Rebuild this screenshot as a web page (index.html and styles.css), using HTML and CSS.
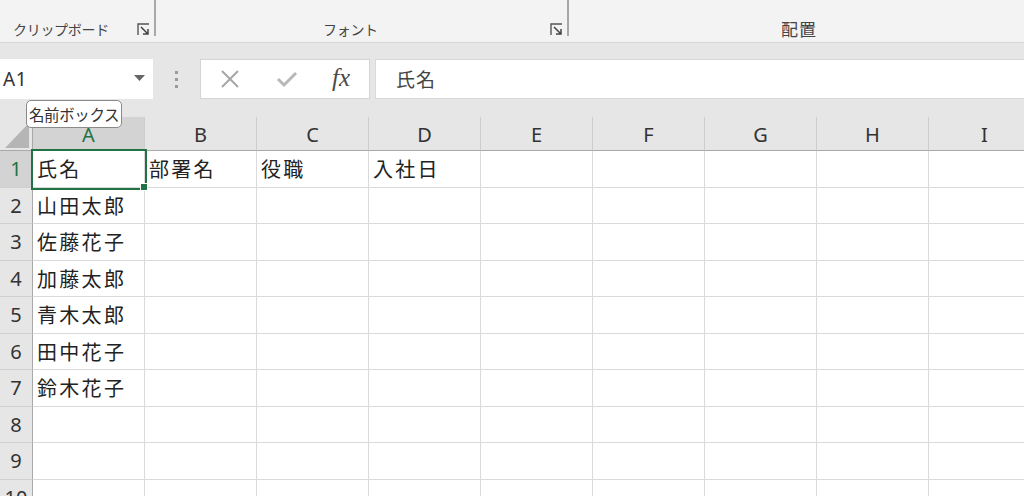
FILE: index.html
```html
<!DOCTYPE html>
<html lang="ja">
<head>
<meta charset="utf-8">
<link rel="stylesheet" href="styles.css">
</head>
<body>
<div class="ribbon">
  <div class="group g1">
    <span class="glabel">クリップボード</span>
    <svg class="launcher" width="13" height="13" viewBox="0 0 13 13"><path d="M1 12V1H12" fill="none" stroke="#555" stroke-width="1.4"/><path d="M4 4L11 11M11 6V11H6" fill="none" stroke="#444" stroke-width="1.5"/></svg>
  </div>
  <div class="group g2">
    <span class="glabel">フォント</span>
    <svg class="launcher" width="13" height="13" viewBox="0 0 13 13"><path d="M1 12V1H12" fill="none" stroke="#555" stroke-width="1.4"/><path d="M4 4L11 11M11 6V11H6" fill="none" stroke="#444" stroke-width="1.5"/></svg>
  </div>
  <div class="group g3">
    <span class="glabel">配置</span>
  </div>
</div>
<div class="fbar">
  <div class="namebox">
    <span class="ref">A1</span>
    <svg class="dd" width="11" height="6" viewBox="0 0 11 6"><path d="M0 0H11L5.5 6Z" fill="#666"/></svg>
  </div>
  <div class="grip"><i></i><i></i><i></i></div>
  <div class="fbtns">
    <svg width="20" height="20" viewBox="0 0 20 20"><path d="M2 2L18 18M18 2L2 18" stroke="#a6a6a6" stroke-width="2" fill="none"/></svg>
    <svg width="22" height="18" viewBox="0 0 22 18"><path d="M2 9L8 15L20 3" stroke="#b8b8b8" stroke-width="3" fill="none"/></svg>
    <span class="fx">fx</span>
  </div>
  <div class="finput">氏名</div>
  <div class="tooltip">名前ボックス</div>
</div>
<div class="sheet">
  <div class="corner"><svg width="33" height="34" viewBox="0 0 33 34"><path d="M5 31H29V6Z" fill="#b5b5b5"/></svg></div>
  <div class="ch sel">A</div><div class="ch">B</div><div class="ch">C</div><div class="ch">D</div><div class="ch">E</div><div class="ch">F</div><div class="ch">G</div><div class="ch">H</div><div class="ch">I</div>

  <div class="rh sel">1</div><div class="c active">氏名</div><div class="c">部署名</div><div class="c">役職</div><div class="c">入社日</div><div class="c"></div><div class="c"></div><div class="c"></div><div class="c"></div><div class="c"></div>
  <div class="rh">2</div><div class="c">山田太郎</div><div class="c"></div><div class="c"></div><div class="c"></div><div class="c"></div><div class="c"></div><div class="c"></div><div class="c"></div><div class="c"></div>
  <div class="rh">3</div><div class="c">佐藤花子</div><div class="c"></div><div class="c"></div><div class="c"></div><div class="c"></div><div class="c"></div><div class="c"></div><div class="c"></div><div class="c"></div>
  <div class="rh">4</div><div class="c">加藤太郎</div><div class="c"></div><div class="c"></div><div class="c"></div><div class="c"></div><div class="c"></div><div class="c"></div><div class="c"></div><div class="c"></div>
  <div class="rh">5</div><div class="c">青木太郎</div><div class="c"></div><div class="c"></div><div class="c"></div><div class="c"></div><div class="c"></div><div class="c"></div><div class="c"></div><div class="c"></div>
  <div class="rh">6</div><div class="c">田中花子</div><div class="c"></div><div class="c"></div><div class="c"></div><div class="c"></div><div class="c"></div><div class="c"></div><div class="c"></div><div class="c"></div>
  <div class="rh">7</div><div class="c">鈴木花子</div><div class="c"></div><div class="c"></div><div class="c"></div><div class="c"></div><div class="c"></div><div class="c"></div><div class="c"></div><div class="c"></div>
  <div class="rh">8</div><div class="c"></div><div class="c"></div><div class="c"></div><div class="c"></div><div class="c"></div><div class="c"></div><div class="c"></div><div class="c"></div><div class="c"></div>
  <div class="rh">9</div><div class="c"></div><div class="c"></div><div class="c"></div><div class="c"></div><div class="c"></div><div class="c"></div><div class="c"></div><div class="c"></div><div class="c"></div>
  <div class="rh">10</div><div class="c"></div><div class="c"></div><div class="c"></div><div class="c"></div><div class="c"></div><div class="c"></div><div class="c"></div><div class="c"></div><div class="c"></div>
</div>
</body>
</html>
```

FILE: styles.css
```css
* { box-sizing: border-box; }
html, body { margin: 0; padding: 0; }
body {
  width: 1024px;
  height: 496px;
  overflow: hidden;
  background: #e6e6e6;
  font-family: "Noto Sans", "Noto Sans CJK JP", sans-serif;
  color: #222;
}

/* Ribbon */
.ribbon {
  height: 43px;
  background: #f3f3f3;
  border-bottom: 1px solid #d6d6d6;
  display: flex;
  overflow: hidden;
}
.group {
  position: relative;
  height: 36px;
  display: flex;
  align-items: flex-end;
  flex: none;
}
.g1 { width: 156px; border-right: 2px solid #a8a8a8; padding-left: 13px; }
.g2 { width: 413px; border-right: 2px solid #a8a8a8; padding-left: 167px; }
.g3 { width: 456px; padding-left: 212px; }
.glabel {
  font-family: "Noto Sans CJK JP", sans-serif;
  font-size: 14px;
  color: #444;
  line-height: 20px;
  margin-bottom: -3px;
  letter-spacing: -0.3px;
}
.g3 .glabel { font-size: 17px; letter-spacing: 1px; }
.launcher {
  margin-left: auto;
  margin-right: 4px;
  margin-bottom: 0px;
}

/* Formula bar */
.fbar {
  position: relative;
  height: 74px;
  padding-top: 16px;
  display: flex;
  align-items: flex-start;
}
.namebox {
  width: 153px;
  height: 40px;
  background: #fff;
  display: flex;
  align-items: center;
  padding-left: 3px;
  padding-right: 8px;
}
.ref {
  font-family: "Noto Sans", sans-serif;
  font-size: 19px;
  color: #333;
  letter-spacing: 0.5px;
}
.dd { margin-left: auto; margin-top: -2px; }
.grip {
  width: 47px;
  height: 40px;
  display: flex;
  flex-direction: column;
  align-items: center;
  justify-content: center;
  gap: 4px;
}
.grip i {
  display: block;
  width: 3px;
  height: 3px;
  background: #9a9a9a;
}
.fbtns {
  width: 170px;
  height: 40px;
  background: #fff;
  border: 1px solid #d4d4d4;
  display: flex;
  align-items: center;
  padding-left: 19px;
  gap: 0;
}
.fbtns svg:first-child { margin-right: 36px; }
.fbtns svg:nth-child(2) { margin-right: 34px; }
.fx {
  font-family: "Liberation Serif", serif;
  font-style: italic;
  font-size: 25px;
  color: #4a4a4a;
  line-height: 1;
  margin-top: -4px;
}
.finput {
  margin-left: 5px;
  flex: 1;
  height: 40px;
  background: #fff;
  border: 1px solid #d9d9d9;
  border-right: none;
  padding-left: 20px;
  font-family: "Noto Sans CJK JP", sans-serif;
  font-size: 19px;
  color: #444;
  line-height: 38px;
  letter-spacing: 1px;
}
.tooltip {
  position: absolute;
  left: 26px;
  top: 57px;
  height: 28px;
  padding: 0 2px;
  background: #fff;
  border: 1px solid #8a8a8a;
  border-radius: 5px;
  font-family: "Noto Sans CJK JP", sans-serif;
  font-size: 15.5px;
  line-height: 26px;
  letter-spacing: -0.4px;
  color: #333;
  z-index: 5;
}

/* Sheet */
.sheet {
  display: grid;
  grid-template-columns: 33px repeat(9, 112px);
  grid-template-rows: 34px repeat(10, 36.5px);
  background: #fff;
  width: 1041px;
}
.corner {
  background: #e6e6e6;
  border-right: 1px solid #a9a9a9;
  border-bottom: 1px solid #a9a9a9;
}
.corner svg { display: block; }
.ch {
  background: #e6e6e6;
  border-right: 1px solid #cdcdcd;
  border-bottom: 1px solid #a9a9a9;
  display: flex;
  align-items: center;
  justify-content: center;
  font-family: "Noto Sans", sans-serif;
  font-size: 20px;
  color: #333;
  padding-top: 1px;
}
.ch.sel {
  background: #d3d3d3;
  color: #217346;
}
.rh {
  background: #e6e6e6;
  border-right: 1px solid #a9a9a9;
  border-bottom: 1px solid #d0d0d0;
  display: flex;
  align-items: center;
  justify-content: center;
  font-family: "Noto Sans", sans-serif;
  font-size: 20px;
  color: #333;
}
.rh.sel {
  background: #d3d3d3;
  color: #217346;
}
.c {
  border-right: 1px solid #dadada;
  border-bottom: 1px solid #dadada;
  display: flex;
  align-items: center;
  padding-left: 4px;
  font-family: "Noto Sans CJK JP", sans-serif;
  font-size: 20px;
  letter-spacing: 2.3px;
  color: #222;
  white-space: nowrap;
}
.c.active {
  position: relative;
  outline: 2px solid #217346;
  outline-offset: 0px;
  z-index: 2;
}
.c.active::after {
  content: "";
  position: absolute;
  right: -4px;
  bottom: -4px;
  width: 6px;
  height: 6px;
  background: #217346;
  border: 1px solid #fff;
}
```
